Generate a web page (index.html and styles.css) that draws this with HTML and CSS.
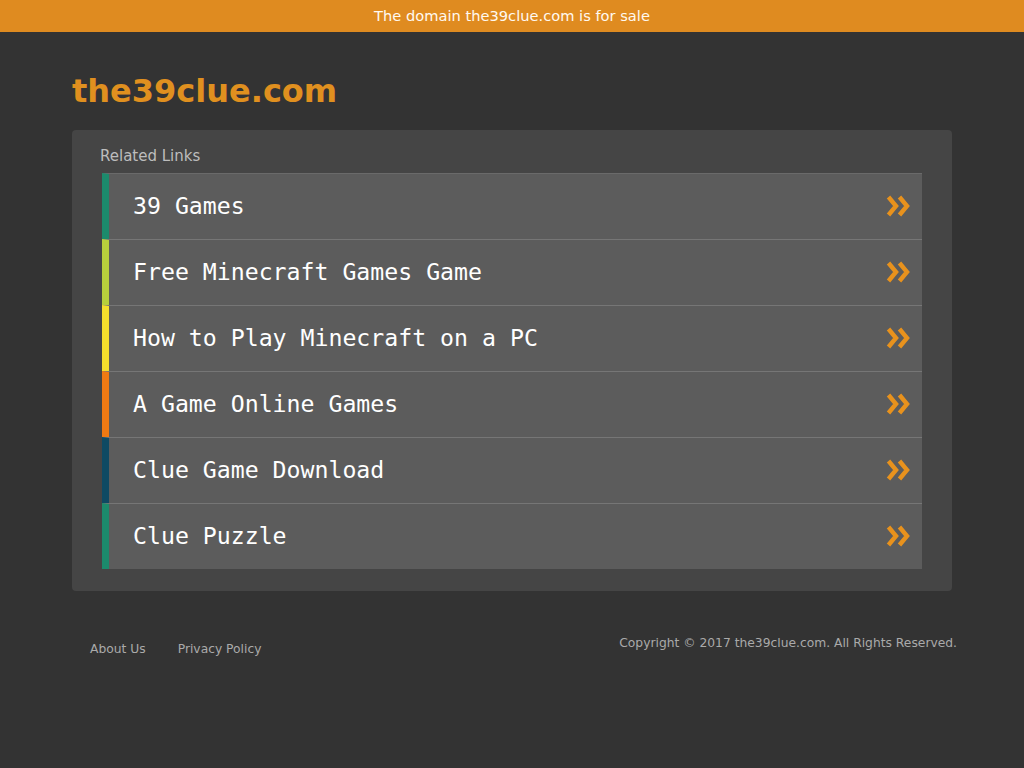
FILE: index.html
```html
<!DOCTYPE html>
<html lang="en">
<head>
<meta charset="utf-8">
<title>the39clue.com</title>
<link rel="stylesheet" href="styles.css">
</head>
<body>
<div class="banner">The domain the39clue.com is for sale</div>
<div class="wrap">
  <h1 class="logo">the39clue.com</h1>
  <div class="panel">
    <div class="panel-title">Related Links</div>
    <ul class="links">
      <li class="link c1"><span class="label">39 Games</span><svg class="arr" viewBox="0 0 26 22" width="26" height="22"><path d="M2.5 2 L10 11 L2.5 20 M13.5 2 L21 11 L13.5 20" fill="none" stroke="#e8921d" stroke-width="4.4"/></svg></li>
      <li class="link c2"><span class="label">Free Minecraft Games Game</span><svg class="arr" viewBox="0 0 26 22" width="26" height="22"><path d="M2.5 2 L10 11 L2.5 20 M13.5 2 L21 11 L13.5 20" fill="none" stroke="#e8921d" stroke-width="4.4"/></svg></li>
      <li class="link c3"><span class="label">How to Play Minecraft on a PC</span><svg class="arr" viewBox="0 0 26 22" width="26" height="22"><path d="M2.5 2 L10 11 L2.5 20 M13.5 2 L21 11 L13.5 20" fill="none" stroke="#e8921d" stroke-width="4.4"/></svg></li>
      <li class="link c4"><span class="label">A Game Online Games</span><svg class="arr" viewBox="0 0 26 22" width="26" height="22"><path d="M2.5 2 L10 11 L2.5 20 M13.5 2 L21 11 L13.5 20" fill="none" stroke="#e8921d" stroke-width="4.4"/></svg></li>
      <li class="link c5"><span class="label">Clue Game Download</span><svg class="arr" viewBox="0 0 26 22" width="26" height="22"><path d="M2.5 2 L10 11 L2.5 20 M13.5 2 L21 11 L13.5 20" fill="none" stroke="#e8921d" stroke-width="4.4"/></svg></li>
      <li class="link c1"><span class="label">Clue Puzzle</span><svg class="arr" viewBox="0 0 26 22" width="26" height="22"><path d="M2.5 2 L10 11 L2.5 20 M13.5 2 L21 11 L13.5 20" fill="none" stroke="#e8921d" stroke-width="4.4"/></svg></li>
    </ul>
  </div>
  <div class="footer">
    <div class="foot-links"><a href="#">About Us</a><a href="#">Privacy Policy</a></div>
    <div class="copy">Copyright © 2017 the39clue.com. All Rights Reserved.</div>
  </div>
</div>
</body>
</html>
```

FILE: styles.css
```css
html, body {
  margin: 0;
  padding: 0;
  background: #333333;
  font-family: "DejaVu Sans", sans-serif;
}
.banner {
  height: 32px;
  line-height: 31px;
  background: #df8b20;
  color: #fff9f0;
  text-align: center;
  font-size: 14.65px;
}
.wrap {
  width: 880px;
  margin: 0 auto;
}
.logo {
  margin: 0;
  padding-top: 39px;
  height: 59px;
  font-size: 32px;
  line-height: 40px;
  font-weight: bold;
  color: #e0901f;
}
.panel {
  background: #454545;
  border-radius: 4px;
  padding: 14px 30px 22px 30px;
}
.panel-title {
  color: #bdbdbd;
  font-size: 15px;
  line-height: 24px;
  margin-left: -2px;
  height: 29px;
}
.links {
  list-style: none;
  margin: 0;
  padding: 0;
}
.link {
  display: flex;
  align-items: center;
  justify-content: space-between;
  height: 65px;
  background: #5c5c5c;
  border-top: 1px solid #6a6a6a;
  border-left: 7px solid #1e8a6e;
  padding: 0 10px 0 24px;
}
.link + .link {
  border-top: 1px solid #767676;
}
.c1 { border-left-color: #1c8a6c; }
.c2 { border-left-color: #b7cf3c; }
.c3 { border-left-color: #f5df2c; }
.c4 { border-left-color: #ef7a13; }
.c5 { border-left-color: #0f4a63; }
.label {
  font-family: "DejaVu Sans Mono", monospace;
  font-size: 23.2px;
  line-height: 26px;
  margin-top: -2px;
  color: #ffffff;
}
.arr {
  display: block;
  margin-top: -1px;
}
.footer {
  display: flex;
  justify-content: space-between;
  padding: 45px 0 0 18px;
  margin-right: -5px;
}
.foot-links {
  display: flex;
  gap: 32px;
  padding-top: 6px;
}
.foot-links a {
  color: #aaaaaa;
  text-decoration: none;
  font-size: 12.3px;
}
.copy {
  color: #aaaaaa;
  font-size: 12.3px;
}
```
